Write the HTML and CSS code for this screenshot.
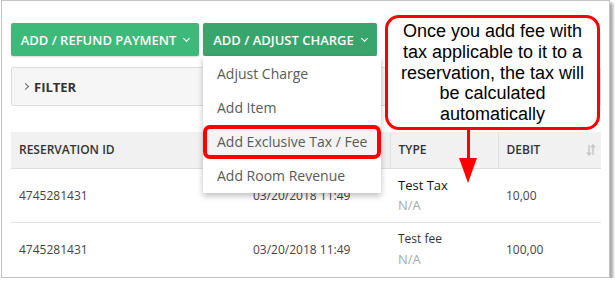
FILE: index.html
```html
<!DOCTYPE html>
<html lang="en">
<head>
  <meta charset="UTF-8" />
  <title>Folio</title>
  <link rel="stylesheet" href="styles.css">
</head>
<body>
  <div class="shot">
    <div class="actions">
      <button class="btn">ADD / REFUND PAYMENT <span class="caret"></span></button>
      <div class="btn-group">
        <button class="btn active">ADD / ADJUST CHARGE <span class="caret"></span></button>
        <ul class="dropdown">
          <li>Adjust Charge</li>
          <li>Add Item</li>
          <li class="hover">Add Exclusive Tax / Fee</li>
          <li>Add Room Revenue</li>
        </ul>
      </div>
    </div>

    <div class="filter"><span class="chev"></span>FILTER</div>

    <table class="grid">
      <thead>
        <tr>
          <th class="c-id">RESERVATION ID</th>
          <th class="c-date"></th>
          <th class="c-type">TYPE</th>
          <th class="c-debit">DEBIT
            <svg class="sort" width="10" height="12" viewBox="0 0 10 12">
              <path d="M3 1v10M1 8.5l2 2.5 2-2.5M7 11V1M5 3.5l2-2.5 2 2.5" stroke="#c8c8c8" stroke-width="1.5" fill="none"/>
            </svg>
          </th>
        </tr>
      </thead>
      <tbody>
        <tr>
          <td>4745281431</td>
          <td>03/20/2018 11:49</td>
          <td><div class="type-name">Test Tax</div><div class="na">N/A</div></td>
          <td>10,00</td>
        </tr>
        <tr>
          <td>4745281431</td>
          <td>03/20/2018 11:49</td>
          <td><div class="type-name small">Test fee</div><div class="na">N/A</div></td>
          <td>100,00</td>
        </tr>
      </tbody>
    </table>

    <div class="callout">Once you add fee with tax applicable to it to a reservation, the tax will be calculated automatically</div>
    <div class="arrow"></div>
  </div>
</body>
</html>
```

FILE: styles.css
```css
body {
  margin: 0;
  background: #fff;
  font-family: 'Open Sans', sans-serif;
}
.shot {
  position: relative;
  box-sizing: border-box;
  width: 609px;
  height: 278px;
  margin-left: 1px;
  padding: 22px 0 0 9px;
  border: 1px solid #c4c4c4;
  box-shadow: 3px 3px 3px rgba(0, 0, 0, 0.35);
  background: #fff;
}
.actions {
  display: flex;
  gap: 4px;
}
.btn-group {
  position: relative;
}
.btn {
  height: 33px;
  padding: 0;
  border: none;
  border-radius: 2px;
  background: #3dba7a;
  color: #fff;
  font-family: 'Open Sans', sans-serif;
  font-size: 13px;
  font-weight: 600;
  white-space: nowrap;
  flex-shrink: 0;
  display: flex;
  align-items: center;
  justify-content: center;
  gap: 8px;
  box-shadow: 0 1px 2px rgba(0, 0, 0, 0.15);
}
.btn:first-child {
  width: 188px;
}
.btn.active {
  background: #39a56c;
  width: 174px;
}
.caret {
  width: 4px;
  height: 4px;
  border-right: 1.5px solid #fff;
  border-bottom: 1.5px solid #fff;
  transform: rotate(45deg);
  margin-top: -3px;
}
.dropdown {
  position: absolute;
  top: 33px;
  left: 0;
  z-index: 2;
  width: 178px;
  margin: 0;
  padding: 1px 0 0;
  list-style: none;
  background: #fff;
  box-shadow: 0 3px 6px rgba(0, 0, 0, 0.25);
}
.dropdown li {
  position: relative;
  height: 34px;
  line-height: 34px;
  padding-left: 14px;
  font-size: 14px;
  color: #5a5a5a;
}
.dropdown li.hover {
  background: #f4f4f4;
}
.dropdown li.hover::after {
  content: "";
  position: absolute;
  inset: 0;
  border: 4px solid #ff0000;
  border-radius: 7px;
}
.filter {
  box-sizing: border-box;
  width: 590px;
  height: 39px;
  margin-top: 11px;
  padding-left: 11px;
  display: flex;
  align-items: center;
  gap: 6px;
  border: 1px solid #dcdcdc;
  border-radius: 2px;
  background: #f6f6f6;
  font-size: 13px;
  font-weight: 700;
  color: #333;
}
.chev {
  width: 4px;
  height: 4px;
  border-right: 1.3px solid #666;
  border-top: 1.3px solid #666;
  transform: rotate(45deg);
}
.grid {
  width: 590px;
  margin-top: 26px;
  border-collapse: collapse;
  table-layout: fixed;
  font-size: 12px;
  color: #444;
}
.grid th {
  box-sizing: border-box;
  height: 36px;
  padding: 0 8px;
  text-align: left;
  background: #f1f1f1;
  border-bottom: 1px solid #dedede;
  font-size: 12px;
  font-weight: 600;
  color: #333;
}
.grid th + th {
  border-left: 1px solid #e2e2e2;
}
.c-id { width: 234px; }
.c-date { width: 145px; }
.c-type { width: 108px; }
.c-debit { position: relative; }
.sort {
  position: absolute;
  right: 5px;
  top: 12px;
}
.grid td {
  height: 53px;
  padding: 0 8px;
  border-bottom: 1px solid #e2e2e2;
  vertical-align: middle;
  white-space: nowrap;
}
.grid tbody tr:last-child td {
  border-bottom: none;
}
.type-name {
  font-size: 13px;
  color: #111;
  line-height: 18px;
}
.type-name.small {
  font-size: 12px;
  color: #333;
}
.na {
  margin-top: 2px;
  color: #aaa;
  font-size: 13px;
}
.callout {
  position: absolute;
  left: 383px;
  top: 14px;
  width: 215px;
  height: 115px;
  box-sizing: border-box;
  padding: 3px 12px 0;
  border: 3px solid #ff0000;
  border-radius: 14px;
  background: #fff;
  font-family: 'Liberation Sans', Arial, sans-serif;
  font-size: 18px;
  line-height: 20.8px;
  text-align: center;
  color: #000;
  z-index: 3;
}
.arrow {
  position: absolute;
  left: 465px;
  top: 128px;
  width: 3px;
  height: 32px;
  background: #ff0000;
  z-index: 3;
}
.arrow::after {
  content: "";
  position: absolute;
  left: -8px;
  top: 29px;
  border-left: 9.5px solid transparent;
  border-right: 9.5px solid transparent;
  border-top: 25px solid #ff0000;
}
```
